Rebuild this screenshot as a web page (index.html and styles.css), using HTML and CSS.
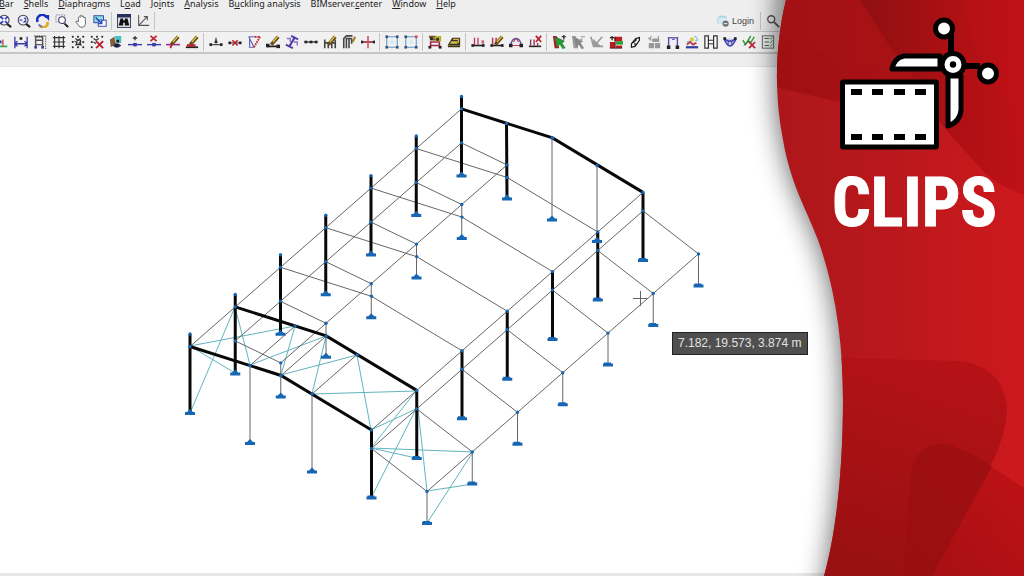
FILE: index.html
```html
<!DOCTYPE html>
<html lang="en">
<head>
<meta charset="utf-8">
<title>Clips</title>
<link rel="stylesheet" href="styles.css">
</head>
<body>
<div class="app">
  <header class="chrome">
    <nav class="menu">
      <a href="#"><u>B</u>ar</a><a href="#"><u>S</u>hells</a><a href="#"><u>D</u>iaphragms</a><a href="#">L<u>o</u>ad</a><a href="#">Jo<u>i</u>nts</a><a href="#"><u>A</u>nalysis</a><a href="#">B<u>u</u>ckling analysis</a><a href="#">BIMserver.<u>c</u>enter</a><a href="#"><u>W</u>indow</a><a href="#"><u>H</u>elp</a>
    </nav>
    <div class="tools tools-view">
      <div class="group" data-icons="zoomall zoom2 redraw zoomwin hand copyview | find axes |"></div>
      <div class="account">
        <button class="login" type="button"><svg class="icon" viewBox="0 0 16 16"><path d="M3 11A5 5 0 0 1 12 5" fill="none" stroke="#a9d5e2" stroke-width="2"/><circle cx="6" cy="8" r="4" fill="#d5eaf0"/><circle cx="11" cy="11" r="3.5" fill="#68757a"/><path d="M9 11h4" stroke="#fff"/></svg>Login</button>
        <span class="sep"></span>
        <button class="tool" type="button" aria-label="Search"><svg class="icon" viewBox="0 0 16 16"><circle cx="6" cy="6" r="4" fill="none" stroke="#555" stroke-width="1.6"/><path d="M9 9l6 6" stroke="#555" stroke-width="2"/></svg></button>
      </div>
    </div>
    <div class="tools tools-edit">
      <div class="group" data-icons="node dimension framegrid grid nodes nodesdel eye baradd bardel baredit barpaint | support supportdel truss beamedit section segment portaledit shelledit cross | plane planenode | loadframe shell | loadadd loadedit loadarc loaddel | pickgreen pickgray pickgray2 blocks eraser blocksgray portal sunset hframe moment check report"></div>
    </div>
  </header>
  <main class="stage">
    <svg class="model" id="model" viewBox="0 67 1024 505" preserveAspectRatio="xMinYMin meet" role="img" aria-label="Structure model"></svg>
    <output class="coords">7.182, 19.573, 3.874 m</output>
  </main>
  <footer class="status"></footer>
  <aside class="panel">
    <svg class="backdrop" viewBox="744 0 280 576" preserveAspectRatio="none" aria-hidden="true">
      <defs>
        <linearGradient id="base" x1="0" x2="1" y1="0" y2="0"><stop offset="0" stop-color="#a8161a"/><stop offset=".5" stop-color="#b9181c"/><stop offset="1" stop-color="#cd191e"/></linearGradient>
        <linearGradient id="dark" x1="0" x2="1" y1="0" y2="0"><stop offset="0" stop-color="#9d0f12"/><stop offset="1" stop-color="#ac1216"/></linearGradient>
        <linearGradient id="right" x1="0" x2="1" y1="0" y2="0"><stop offset="0" stop-color="#8f0f11"/><stop offset=".55" stop-color="#ac1014"/><stop offset="1" stop-color="#be1116"/></linearGradient>
        <linearGradient id="low" x1=".2" x2=".6" y1="1" y2="0"><stop offset="0" stop-color="#961012"/><stop offset="1" stop-color="#b41216"/></linearGradient>
        <linearGradient id="leaf" x1="0" x2="1" y1="1" y2="0"><stop offset="0" stop-color="#a40f12"/><stop offset="1" stop-color="#c11217"/></linearGradient>
        <filter id="soft" x="-40%" y="-20%" width="180%" height="140%"><feGaussianBlur stdDeviation="14"/></filter>
        <clipPath id="edge"><path d="M786 0C775 45 774 95 783 140C791 185 805 206 818 240C836 290 843 345 843 400C843 465 837 530 824 576H1024V0Z"/></clipPath>
      </defs>
      <path d="M785 -60C775 45 774 95 783 140C791 185 805 206 818 240C836 290 843 345 843 400C843 465 837 530 816 640H1060V-60Z" fill="#111" opacity=".64" filter="url(#soft)"/>
      <g clip-path="url(#edge)">
        <path d="M744 0H1024V576H744Z" fill="url(#base)"/>
        <path d="M744 0H862L892 50L912 76L940 130L912 118L840 102L744 80Z" fill="url(#dark)"/>
        <path d="M744 0H862L892 50L912 76L840 60L770 30Z" fill="#a81418" opacity=".35"/>
        <path d="M860 0L892 50L912 76L940 122C956 142 968 154 985 173Q1000 187 1024 195V0Z" fill="url(#right)"/>
        <path d="M962 0L976 50L1024 130V0Z" fill="#c01217" opacity=".35"/>
        <path d="M744 355L957 361C990 363 1007 384 1007 412Q1005 435 994 459L932 576H744Z" fill="url(#low)"/>
        <path d="M903 576L911 475Q914 444 945 444Q960 446 980 459L1024 488V576Z" fill="url(#leaf)"/>
        <path d="M903 576L911 475Q914 444 945 444Q960 446 992 466L932 576Z" fill="#960f12" opacity=".75"/>
      </g>
    </svg>
    <div class="brand">
      <svg class="clip" viewBox="836 14 168 140" aria-hidden="true">
        <path d="M951 34v24M958 66h22" stroke="#000" stroke-width="6" fill="none"/>
        <circle cx="944" cy="28.500" r="8.500" fill="#fff" stroke="#000" stroke-width="5"/>
        <circle cx="988" cy="73.500" r="8.500" fill="#fff" stroke="#000" stroke-width="5"/>
        <path d="M940 56H904Q894 58 892 69H940Z" fill="#fff" stroke="#000" stroke-width="5" stroke-linejoin="round"/>
        <path d="M948 76V126Q960 122 961 110V76Z" fill="#fff" stroke="#000" stroke-width="5" stroke-linejoin="round"/>
        <circle cx="953" cy="64.500" r="11" fill="#fff" stroke="#000" stroke-width="5"/>
        <circle cx="953" cy="64.500" r="3.200"/>
        <rect x="842.500" y="82" width="94" height="65" rx="1" fill="#fff" stroke="#000" stroke-width="5"/>
        <path d="M851 92h11M872 92h11M894 92h11M915 92h11M851 137h11M872 137h11M894 137h11M915 137h11" stroke="#000" stroke-width="6"/>
      </svg>
      <strong class="word">CLIPS</strong>
    </div>
  </aside>
</div>
<script src="script.js"></script>
</body>
</html>
```
FILE: styles.css
```css
* { box-sizing: border-box; }
body { margin: 0; font-family: "Noto Sans", "Open Sans", sans-serif; background: #fff; }
.app { position: relative; display: flex; flex-direction: column; min-height: 100vh; overflow: hidden; }
.chrome { background: #eeeeee; padding-bottom: 12px; border-bottom: 1px solid #e4e4e4; }
.menu { display: flex; gap: 10px; height: 10px; align-items: flex-end; margin-left: -1px; font-size: 9px; line-height: 12px; white-space: nowrap; }
.menu a { color: #222; text-decoration: none; }
.tools { display: flex; align-items: center; }
.tools-view { height: 21px; justify-content: space-between; }
.tools-edit { height: 23px; border-top: 1px solid #c9c9c9; border-bottom: 2px solid #c6c6c6; background: #f1f1f1; }
.group { display: flex; align-items: center; }
.tools-view .group { margin-left: -5px; }
.tools-edit .group { margin-left: -8px; }
.tool { flex: none; width: 19px; height: 18px; padding: 0; border: 0; background: none; display: flex; align-items: center; justify-content: center; }
.icon { width: 14px; height: 14px; display: block; }
.sep { flex: none; width: 1px; height: 18px; margin: 0 2px; background: #c4c4c4; }
.account { display: flex; align-items: center; margin-right: 242px; }
.login { display: flex; align-items: center; gap: 2px; padding: 0 4px 0 0; border: 0; background: none; font-family: "Liberation Sans", sans-serif; font-size: 9px; line-height: 14px; color: #444; }
.stage { position: relative; flex: 1; background: #fff; }
.model { display: block; width: 100%; }
.coords { position: absolute; left: 672px; top: 265px; padding: 3px 6px 3px 5px; border: 1px solid #222; background: #4f4f4f; color: #e2e2e2; font: 12px/15px "Liberation Sans", sans-serif; white-space: nowrap; z-index: 2; }
.status { height: 3px; background: #e8e8e8; }
.panel { position: absolute; top: 0; right: 0; bottom: 0; width: 280px; }
.backdrop { position: absolute; width: 100%; height: 100%; overflow: visible; }
.brand { position: relative; display: flex; flex-direction: column; align-items: flex-start; padding: 14px 20px 0 92px; }
.clip { width: 168px; height: 140px; }
.word { font: 700 68px/80px "Roboto Condensed", "Liberation Sans Narrow", "Roboto", sans-serif; color: #fff; -webkit-text-stroke: 1px #fff; margin: 9px 0 0 -4px; }

.thin { stroke: #666; stroke-width: 1; fill: none; }
.bold { stroke: #080808; stroke-width: 3; fill: none; }
.brace { stroke: #62b4be; stroke-width: 1; fill: none; }
.node, .foot { fill: #1766b4; }
```
FILE: script.js
```js
const K = '#222', B = '#3a3aa8', R = '#c02030', G = '#888';
const p = (d, s = K, w = 1.3, f = 'none') => `<path d="${d}" stroke="${s}" stroke-width="${w}" fill="${f}"/>`;
const f = (d, c) => `<path d="${d}" fill="${c}"/>`;
const dots = (pts, c = K, s = 3) => pts.map(([x, y]) => `<rect x="${x - s / 2}" y="${y - s / 2}" width="${s}" height="${s}" fill="${c}"/>`).join('');
const lens = p('M10 11l5 4', K, 2.4) + '<circle cx="7" cy="7" r="5.600" fill="#eef" stroke="#445" stroke-width="1.2"/>';
const pencil = p('M6 11L14 2', '#6a4a20', 4) + p('M8 8L14 1', '#e0d040', 1.4);
const del = p('M4 1l7 6M11 1l-7 6', R, 2);
const bar = p('M0 11h16', B, 1.6) + dots([[8, 11]], B, 4);

const icons = {
  zoomall: lens + p('M3 3l8 8M11 3l-8 8', '#2838b0', 1.8) + dots([[7, 7]], '#fff', 3),
  zoom2: lens + p('M3 7h3M8 5h2v2l-2 2h3', '#44a', 1.2),
  redraw: p('M2 9A5.500 5.500 0 0 1 12 4', '#1830c0', 3) + f('M9 1h6v7z', '#1830c0') + p('M13 9A5 5 0 0 1 4 13', '#e4ac28', 3) + p('M3 12l4 3', '#6670c0', 2),
  zoomwin: '<rect x="1" y="1" width="10" height="8" fill="none" stroke="#889" stroke-dasharray="2 1"/>' + p('M11 11l4 4', K, 2.4) + '<circle cx="8" cy="7" r="3.800" fill="#fff" stroke="#446" stroke-width="1.3"/>',
  hand: p('M5 9V4q1-2 2 0V2q1-2 2 0v1q2-2 2 1q3-1 2 2v6q-1 3-3 3H7L2 9q0-2 3 0', '#666', 1.1, '#fff'),
  copyview: '<rect x="1" y="2" width="11" height="8" fill="#8cdde0" stroke="#2838a0"/><rect x="6" y="7" width="9" height="7" fill="#fff" stroke="#2838a0"/>' + p('M3 4l7 7M10 7v4H6', '#2040c0', 1.6),
  find: '<rect width="16" height="16" fill="#26305c"/><rect x="1" y="4" width="14" height="11" fill="#ddd"/>' + f('M4 5h3v2h2V5h3l2 8H9v-3H7v3H2z', '#111'),
  axes: p('M3 1v12h12M3 13L13 3M9 3h4v4', '#555', 1.2),
  node: p('M0 3l7 5M4 13h10', '#38a848', 1.8) + p('M9 5v7', R) + dots([[6, 8]], B),
  dimension: p('M1 2v13M15 2v13M1 10h14M4 7L1 10l3 3M12 7l3 3-3 3', B, 1.5) + dots([[8, 4]], K, 3),
  framegrid: p('M3 15V2h8v13M3 6h8M3 11h8', '#555', 1.6) + '<path d="M14.500 1v15M1 1h14" stroke="#222" stroke-dasharray="1 1"/>' + dots([[3, 14], [11, 14]], B),
  grid: p('M3 1v14M8 1v14M13 1v14M1 3h14M1 8h14M1 13h14', '#333', 1.3),
  nodes: dots([[2, 2], [8, 2], [14, 2], [2, 8], [14, 8], [2, 14], [8, 14], [14, 14]], K, 2) + p('M5 4l3 2 3-2M4 7l3 2-2 3M11 7l-2 3 3 2M7 6h4v5H6z', '#333', 1.2),
  nodesdel: dots([[2, 2], [8, 2], [14, 2], [2, 8], [2, 14]], K, 2) + p('M4 4l3 2 3-2M4 8l3 2', '#333', 1.3) + p('M7 7l8 8M15 7l-8 8', R, 2.2),
  eye: f('M6 1h8v8H9z', '#49c2c4') + f('M1 5l5-3 2 8-6 4z', '#806038') + f('M4 12q5-5 10 0-5 5-10 0z', '#336') + dots([[9, 12], [10, 7]], '#181818', 3),
  baradd: p('M0 11h16', B, 1.6) + dots([[8, 11]], B, 4) + p('M8 1v5M5.500 3.500h5', K, 1.3),
  bardel: bar + del,
  baredit: p('M0 11h16', '#a02890', 1.8) + p('M5 15l3-8', R, 2) + pencil,
  barpaint: p('M1 14h14', '#222', 2) + p('M2 12h10', R, 3) + pencil,
  support: p('M1 11h14', '#555', 1.4) + dots([[2, 11], [8, 8], [14, 11]], K, 3) + p('M8 3v4', K),
  supportdel: p('M1 9h14', '#555', 1.4) + dots([[2, 9], [14, 9]]) + p('M5 6l6 6M11 6l-6 6', R, 2),
  truss: p('M2 2l6 12M2 2h8M3 2v11M8 14H2', '#6060bc', 1.3) + '<path d="M9 2h6L8 14" stroke="#c02030" stroke-width="2" stroke-dasharray="2 1" fill="none"/>',
  beamedit: p('M1 13h14', K, 2) + dots([[2, 12], [14, 13]], K, 4) + pencil,
  section: p('M7 1l8 4M1 11l8 4M11 3L5 13', '#5540a8', 2.4) + p('M2 4h4v4M10 8h4v4', '#8a70d0', 1.6),
  segment: p('M1 8h14', K, 1.4) + dots([[2, 8], [8, 8], [14, 8]], K, 3),
  portaledit: p('M2 15V5M14 15V5M2 9h12M6 15V9M10 15V9', '#444', 1.8) + pencil,
  shelledit: p('M2 15V4l3-3h7M5 15V4h6M8 15V4M11 10V4', '#444', 1.8) + p('M12 8l3-6', '#a88020', 2.5),
  cross: p('M1 8h14', K, 1.4) + p('M8 1v14M3 8h10', '#cc4058', 1.6) + dots([[1, 8], [15, 8]]),
  plane: p('M2 2h12v12H2z', '#5599cc', 1.2) + dots([[2, 2], [14, 2], [2, 14], [14, 14]], '#345078', 3) + dots([[8, 8]], '#d2ebf3', 4),
  planenode: p('M2 2h12v12H2z', '#5599cc', 1.2) + dots([[2, 2], [2, 14], [14, 14]], '#345078', 3) + dots([[14, 2]], '#dd4058', 3) + dots([[8, 8]], '#d2ebf3', 4),
  loadframe: p('M3 15V8h10v7M2 12h12', '#a02848', 1.8) + p('M1 2h8M2 5h12', '#785820', 2.4) + f('M8 1h7v6H9z', '#b8b020') + dots([[2, 14], [14, 14], [4, 4], [11, 5]], K, 3),
  shell: f('M1 11l5-8h9v9H1z', '#3b3424') + f('M2 12l3-5h7v3H3z', '#cfc53c') + p('M7 5h6v4', '#e0b040', 1.4) + p('M1 13h14', '#443810', 2),
  loadadd: p('M1 12h14', K, 1.8) + dots([[2, 12], [14, 12]]) + p('M4 3v8M8 3v8M12 7h3M12 9h3', '#b83858', 1.5),
  loadedit: p('M1 12h14', K, 1.8) + dots([[2, 12], [14, 12]]) + p('M3 3v8M7 3v8', '#b83858', 1.8) + pencil,
  loadarc: p('M2 12Q3 4 8 4t6 8', '#5050a8', 1.6) + p('M5 8l3-4 3 4M2 12h12', '#c84058', 1.4) + dots([[2, 12], [14, 12]], K, 4),
  loaddel: p('M1 13h14', K, 1.8) + p('M3 5v7M7 5v7M11 9v4', '#883050', 1.5) + p('M9 1l6 7M15 1L9 8', R, 2),
  pickgreen: f('M1 1h4l3 5v9H3z', '#a82024') + f('M3 2l11 5-3 2 4 6-3 1-3-5-3 3z', '#22a032') + p('M3 2l11 5-3 2 4 6', '#165020', .8) + p('M11 2h5M13.500 0v5', K, 1.4),
  pickgray: f('M1 1h4l3 5v9H3z', '#999') + f('M3 2l11 5-3 2 4 6-3 1-3-5-3 3z', G) + p('M11 2h5M13 4l-3 3', '#999', 1.4),
  pickgray2: p('M1 2l3 11h11M14 2l-7 8', '#999', 1.8) + f('M3 4l10 9H4z', '#999'),
  blocks: f('M6 2h9v5H6z', '#b82024') + f('M1 8h6v7H1z', '#b82024') + f('M8 7h8v4H8z', '#24a038') + f('M8 12h7v3H8z', '#b82024') + p('M1 3h5M3.500 1v5', K, 1.4) + p('M7 2v13M1 15h14', '#4a1516', 1),
  eraser: p('M4 10l5-6 4-1v3l-5 7-4 1z', '#181818', 1.4, '#fff') + p('M6 9l4-4M8 12V9', '#222', 1.5),
  blocksgray: f('M6 4h8v4H6zM2 9h6v6H2zM9 9h6v6H9z', '#999') + p('M1 3l4 3M5 1L3 6M13 1v5', '#999', 1.3),
  portal: p('M3 14V3h10v11', '#5050a8', 1.6) + dots([[3, 14], [13, 14]], K, 4) + p('M2 3h12M7 5h3', '#66a', 1.2),
  sunset: '<circle cx="8" cy="5" r="2.500" fill="#e6c54a"/>' + p('M11 1l3 3M12 7l3-2M2 8l4-1', '#70c8d0', 1.5) + p('M2 11l4-3 3 3 4-2', '#c03850', 2) + p('M1 14h14', '#3344a0', 2.6),
  hframe: p('M1 1h4v14H1zM11 1h4v14h-4zM5 6h6v4H5z', '#333', 1.4, '#fff'),
  moment: p('M1 4l5 3h4l5-3M1 4q7 17 14 0', '#4444b0', 1.8, '#c9cff0') + p('M6 7v5M10 7v5', '#4444b0', 1) + dots([[2, 4], [14, 4]], K, 3),
  check: p('M1 6l3 5 6-10M7 6l3 3 4-7', '#30a040', 1.7) + p('M8 8l7 7M15 8l-7 7', R, 2) + p('M2 12l6-5', '#444', 1),
  report: '<rect x="1.500" y="1" width="13" height="14" fill="#edf1ed" stroke="#555"/>' + p('M4 4h5M4 8h5M4 12h5', '#555', 1.2) + p('M10 4l1 1 2-3M10 8l1 1 2-3M10 12l1 1 2-3', '#389048', 1)
};

document.querySelectorAll('[data-icons]').forEach(group => {
  group.innerHTML = group.dataset.icons.split(' ').map(name => name === '|'
    ? '<span class="sep"></span>'
    : `<button class="tool" type="button" aria-label="${name}"><svg class="icon" viewBox="0 0 16 16">${icons[name]}</svg></button>`).join('');
});

// Seven portal frames, each offset by the same step along the building.
const DX = 45.25, DY = -39.6;
const out = { brace: [], thin: [], bold: [], feet: [], nodes: [] };
const at = (i, x, y) => [x + DX * i, y + DY * i];
const line = (kind, ...pts) => out[kind].push(`<polyline class="${kind}" points="${pts.map(q => q.join()).join(' ')}"/>`);
const foot = ([x, y], peak) => out.feet.push(`<path class="foot" d="M${x - 5} ${y - 1}${peak ? `h2l3-3 3 3` : 'h1v-1h7v1'}h2v3h-10z"/>`);
const node = ([x, y]) => out.nodes.push(`<circle class="node" cx="${x}" cy="${y}" r="1.7"/>`);

for (let i = 0; i < 7; i++) {
  const eave = at(i, 190, 346.5), ridge = at(i, 281, 375.5), right = at(i, 371.5, 430);
  const low = at(i, 190, 380.5), mid = at(i, 371.5, 448.5), out1 = at(i, 427, 491.5);
  const end = i < 2 || i === 6;
  line('bold', at(i, 190, 334), at(i, 190, 412));
  line('bold', right, at(i, 371.5, 497));
  line(end ? 'bold' : 'thin', eave, ridge, right);
  line('thin', mid, out1, at(i, 427, 522));
  foot(at(i, 190, 413), true); foot(at(i, 371.5, 497.5)); foot(at(i, 427, 523));
  [eave, ridge, right, mid, out1, at(i, 190, 334)].forEach(node);
  if (i) {
    const inner = at(i, 235.5, 402.5), base = at(i, 235.5, 436);
    line('thin', low, inner);
    line(i === 6 ? 'bold' : 'thin', i === 6 ? [506.5, 123.5] : inner, base);
    foot(base, true); node(low); node(inner);
  }
}
[[190, 346.5, 0], [371.5, 430, 0], [371.5, 448.5, 0], [427, 491.5, 0], [190, 380.5, 1], [235.5, 402.5, 1]]
  .forEach(([x, y, s]) => line('thin', at(s, x, y), at(6, x, y)));
[[250, 365.5], [281, 375.5], [312, 394]].forEach(([x, y]) => line('thin', [x, y], at(1, x, y)));
[[250, 365.5, 443], [312, 394, 471.5], [552, 138, 219.5], [597, 165.5, 241]].forEach(([x, y, b]) => {
  line('thin', [x, y], [x, b]); foot([x, b], true); node([x, y]);
});
[[295, 326], [357, 355], [506.5, 123.5]].forEach(node);
[[190, 346, 295, 326], [235, 307, 250, 365], [190, 346, 235, 373], [235, 307, 190, 413], [250, 365, 326, 336],
 [295, 326, 281, 375], [326, 336, 312, 394], [281, 375, 357, 355], [357, 355, 371, 430], [312, 394, 416, 391],
 [371, 430, 416, 409], [371, 448, 416, 391], [371, 448, 416, 458], [416, 409, 371, 498], [371, 448, 473, 452],
 [416, 391, 427, 491], [427, 491, 473, 484], [473, 452, 427, 523]]
  .forEach(([a, b, c, d]) => line('brace', [a, b], [c, d]));
document.getElementById('model').innerHTML = [out.brace, out.thin, out.bold, out.feet, out.nodes].flat().join('')
  + '<path class="thin" d="M633 298.500h14M640.500 291v15"/>';
```
